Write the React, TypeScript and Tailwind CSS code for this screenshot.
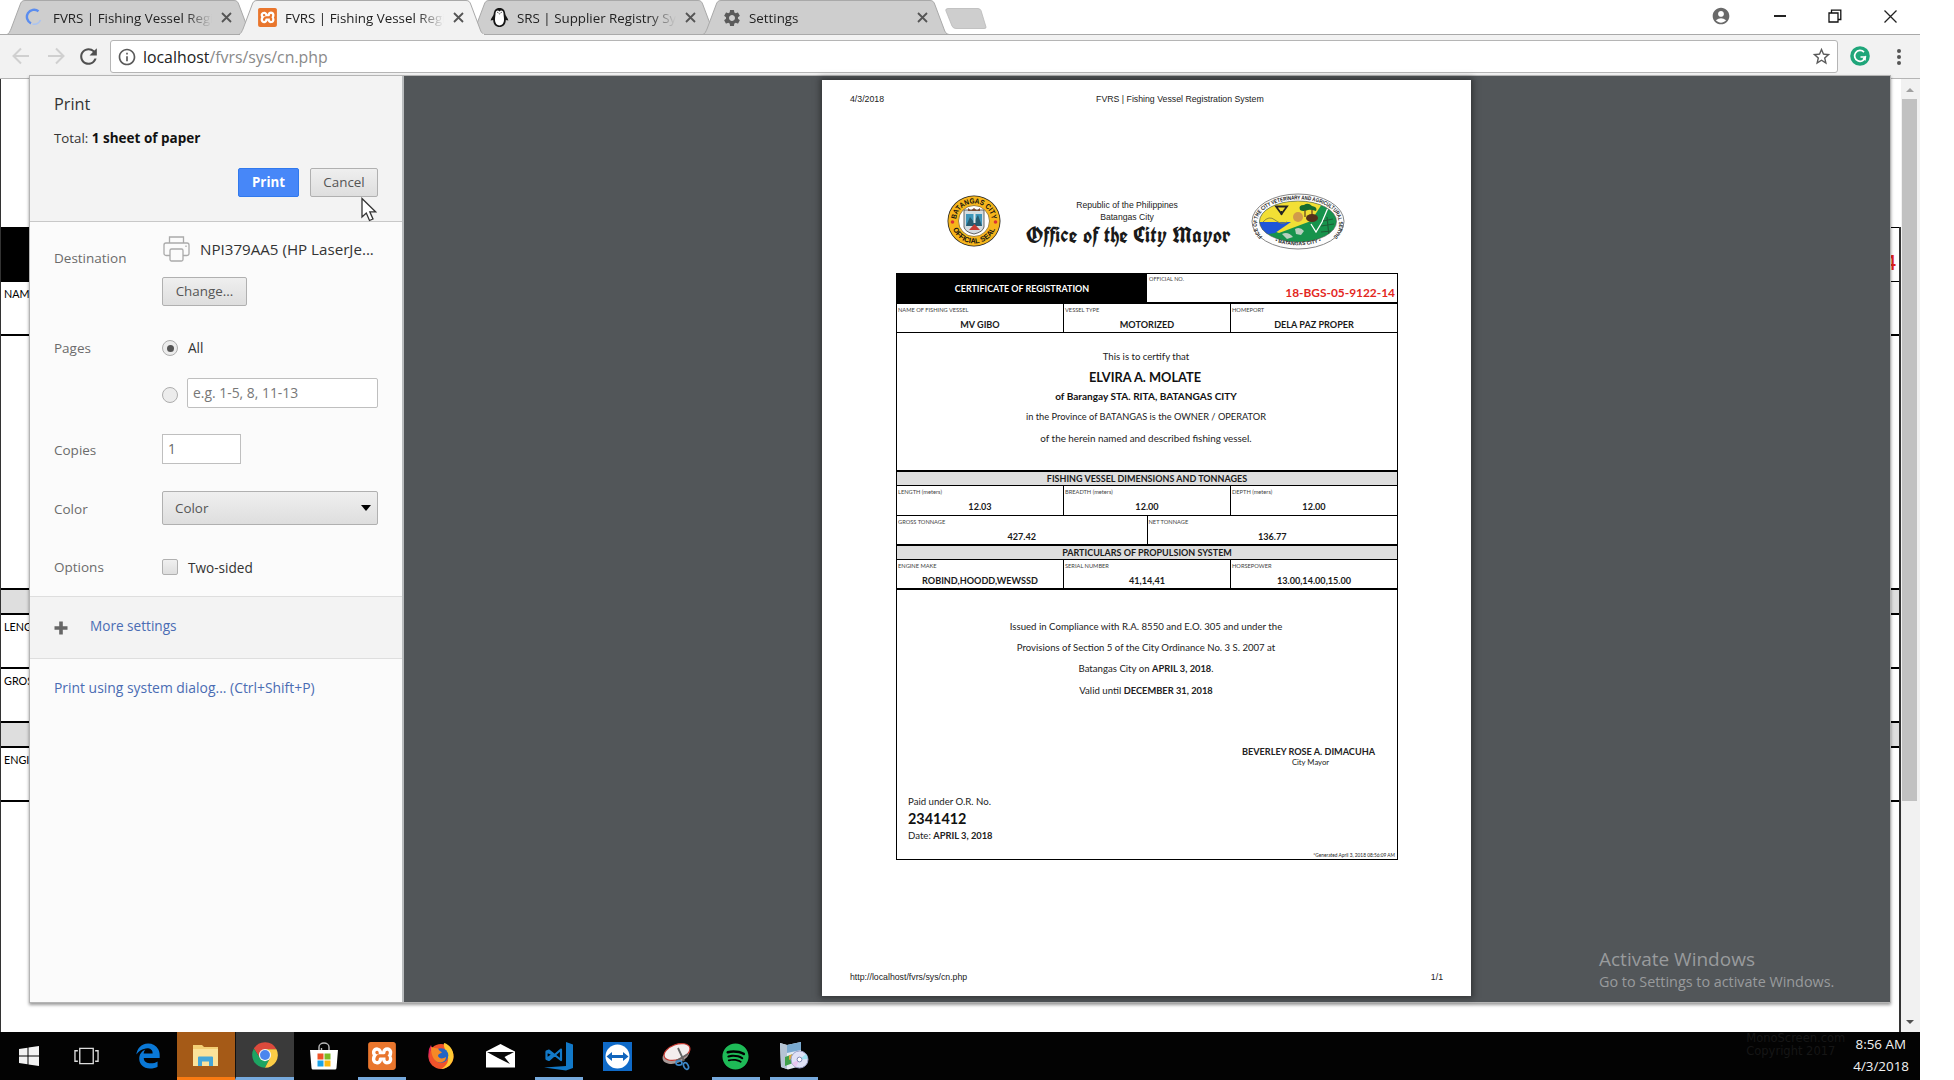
import type { ReactNode } from "react";
import { FaEdgeLegacy, FaSpotify } from "react-icons/fa6";
import { MdSettings, MdAccountCircle, MdStarBorder, MdRefresh, MdInfoOutline } from "react-icons/md";
import { SiXampp } from "react-icons/si";

function TabShape({ active }: { active?: boolean }) {
  return (
    <svg className="absolute inset-0" width="246" height="35" viewBox="0 0 246 35">
      <path d="M0 34.5 C2 34 3 31 4 29 L13 5 C14 2 15 .5 18 .5 H227 C230 .5 231 2 232 5 L241 29 C242 32 243 34 246 34.5 Z" fill={active ? "#f2f2f2" : "#cecece"} stroke="#a9a9a9" />
      {active && <path d="M1 34.5H245" stroke="#f2f2f2" strokeWidth="1.4" />}
    </svg>
  );
}

function Tab({ title, icon, active }: { title: string; icon: ReactNode; active?: boolean }) {
  return (
    <div className={`relative -ml-[14px] h-[35px] w-[246px] shrink-0 ${active ? "z-10" : ""}`}>
      <TabShape active={active} />
      <div className="relative flex h-[35px] items-center pl-[19px]">
        <span className="flex w-[27px] shrink-0">{icon}</span>
        <span className="w-[159px] overflow-hidden whitespace-nowrap text-[13.35px] leading-5 text-[#222] [mask-image:linear-gradient(to_right,#000_83%,transparent)]">{title}</span>
        <svg className="ml-[9px] shrink-0" width="11" height="11" viewBox="0 0 11 11">
          <path d="M1 1L10 10M10 1L1 10" stroke="#555" strokeWidth="1.8" />
        </svg>
      </div>
    </div>
  );
}

function Spinner() {
  return (
    <svg width="20" height="20" viewBox="0 0 20 20" fill="none" className="ml-[-1px]">
      <path d="M13.5 3.2A7.2 7.2 0 1 0 6 15.4" stroke="#5b8def" strokeWidth="2.4" />
      <path d="M7.5 16A7.2 7.2 0 0 0 15.5 12" stroke="#a9c3f2" strokeWidth="1.6" />
    </svg>
  );
}

function XamppIcon({ size }: { size: number }) {
  return (
    <span className="relative flex">
      <span className="absolute inset-[2px] bg-white" />
      <SiXampp size={size} color="#e9762d" className="relative" />
    </span>
  );
}

function Penguin() {
  return (
    <svg width="19" height="21" viewBox="0 0 19 21">
      <path d="M9.5 1C5.5 1 4 3.600 3.700 7C3.500 9 1 11 .6 13.500C1.500 13.500 2.500 13.300 3.200 13C3.200 17.500 6 20 9.500 20S15.800 17.500 15.800 13C16.500 13.300 17.500 13.500 18.400 13.500C18 11 15.500 9 15.300 7C15 3.600 13.500 1 9.500 1Z" fill="#161616" />
      <path d="M9.500 4.500C8 2.500 5.500 3.500 5.500 6.500C5.500 8 5 10 5 12.500C5 16.500 7 18.400 9.500 18.400S14 16.500 14 12.500C14 10 13.500 8 13.500 6.500C13.500 3.500 11 2.500 9.500 4.500Z" fill="#fff" />
      <path d="M8.300 6.200H10.700L9.500 7.800Z" fill="#777" />
      <circle cx="7.800" cy="5.300" r=".6" fill="#333" /><circle cx="11.200" cy="5.300" r=".6" fill="#333" />
    </svg>
  );
}

function TabStrip() {
  return (
    <div className="relative flex h-[35px] items-start border-b border-[#a9a9a9] bg-white pl-[21px]">
      <div className="relative z-10 flex">
        <Tab title="FVRS | Fishing Vessel Registration" icon={<Spinner />} />
        <Tab title="FVRS | Fishing Vessel Registration" icon={<XamppIcon size={19} />} active />
        <Tab title="SRS | Supplier Registry System" icon={<Penguin />} />
        <Tab title="Settings" icon={<MdSettings size={20} color="#5a5a5a" />} />
      </div>
      <svg className="mt-[8px] ml-[-4px]" width="42" height="22" viewBox="0 0 42 22">
        <path d="M3 .5H33Q35 .5 36 2.500L41 19Q41.500 20.500 39 20.500H11Q8 20.500 7 18L.8 2.500Q.5.5 3 .5Z" fill="#cecece" stroke="#b9b9b9" strokeWidth=".8" />
      </svg>
      <div className="ml-auto flex h-[32px] items-center pr-[23px]">
        <MdAccountCircle size={20} color="#6a6a6a" className="-mt-px" />
        <span className="ml-[43px] h-[1.500px] w-[12px] bg-[#222]" />
        <svg className="ml-[42px]" width="14" height="14" viewBox="0 0 14 14" fill="none" stroke="#111" strokeWidth="1.300">
          <path d="M1 4H10V13H1ZM3.500 4V1.200H12.800V10.500H10" />
        </svg>
        <svg className="ml-[42px]" width="13" height="13" viewBox="0 0 13 13">
          <path d="M.5.5L12.500 12.500M12.500.5L.5 12.500" stroke="#222" strokeWidth="1.300" />
        </svg>
      </div>
    </div>
  );
}

function Arrow({ flip }: { flip?: boolean }) {
  return (
    <svg width="18" height="18" viewBox="0 0 18 18" fill="none" stroke="#d0d0d0" strokeWidth="2" className={flip ? "rotate-180" : ""}>
      <path d="M17 9H2M9 1.500L1.500 9L9 16.500" />
    </svg>
  );
}

function Toolbar() {
  return (
    <div className="flex h-[44px] items-start border-b border-[#b5b5b5] bg-[#f2f2f2] pt-[5px]">
      <div className="flex h-8 w-[110px] items-center pl-[12px]">
        <Arrow />
        <span className="ml-[17px] flex"><Arrow flip /></span>
        <MdRefresh size={25} color="#505050" className="ml-[11px]" />
      </div>
      <div className="flex h-[33px] w-[1728px] items-center rounded-[3px] border border-[#b5b5b5] bg-white pr-[5px] pl-[6px]">
        <MdInfoOutline size={20} color="#5a5a5a" />
        <span className="ml-[6px] text-[15.850px] leading-6 text-[#222]">localhost<span className="text-[#8a8a8a]">/fvrs/sys/cn.php</span></span>
        <MdStarBorder size={21} color="#5a5a5a" className="ml-auto" />
      </div>
      <svg className="ml-[12px] mt-[6px]" width="20" height="20" viewBox="0 0 20 20">
        <circle cx="10" cy="10" r="9.800" fill="#1fa67a" />
        <path d="M14 6.200A5.400 5.400 0 1 0 15.300 11H10.500" fill="none" stroke="#fff" strokeWidth="1.700" />
        <path d="M15.800 9.600V14.800L12.600 12.500Z" fill="#fff" />
      </svg>
      <div className="mt-[9px] ml-[27px] flex flex-col gap-[2.500px]">
        <span className="size-[3.500px] rounded-full bg-[#555]" />
        <span className="size-[3.500px] rounded-full bg-[#555]" />
        <span className="size-[3.500px] rounded-full bg-[#555]" />
      </div>
    </div>
  );
}

function PageRow({ className, children }: { className: string; children?: ReactNode }) {
  return (
    <div className={`border-b-2 border-black pt-[5px] pl-[3px] ${className}`}>
      <span className="block w-[27px] overflow-hidden whitespace-nowrap">{children}</span>
    </div>
  );
}

function PageBehind() {
  return (
    <div className="flex h-[953px] bg-white">
      <div className="flex w-[1901px] flex-col border-l border-[#333] pt-[148px] font-[Lato,sans-serif] text-[10.800px] leading-[13px] text-black">
        <div className="flex h-[805px] flex-col border-r-2 border-[#333]">
          <div className="flex h-[55px] border-y border-black">
            <div className="w-1/2 bg-black" />
            <div className="w-1/2 pt-[28px] pr-[3px] text-right text-[20px] font-bold text-[#e2231a]">18-BGS-05-9122-14</div>
          </div>
          <PageRow className="h-[54px]">NAME OF FISHING VESSEL</PageRow>
          <PageRow className="h-[254px]" />
          <PageRow className="h-[25px] bg-[#dedede]" />
          <PageRow className="h-[54px]">LENGTH (meters)</PageRow>
          <PageRow className="h-[54px]">GROSS TONNAGE</PageRow>
          <PageRow className="h-[25px] bg-[#dedede]" />
          <PageRow className="h-[54px]">ENGINE MAKE</PageRow>
        </div>
      </div>
      <div className="flex w-[19px] flex-col items-center bg-[#f1f1f1] pr-[2px]">
        <span className="mt-[9px] h-0 w-0 border-x-[4.500px] border-b-[4.500px] border-x-transparent border-b-[#a0a0a0]" />
        <span className="mt-[7px] h-[702px] w-[15px] bg-[#c1c1c1]" />
        <span className="mt-auto mb-[8px] h-0 w-0 border-x-[4.500px] border-t-[4.500px] border-x-transparent border-t-[#505050]" />
      </div>
    </div>
  );
}

function Row({ label, className, children }: { label: string; className: string; children: ReactNode }) {
  return (
    <div className={`flex ${className}`}>
      <span className="w-[108px] shrink-0 text-[13.500px] leading-5 text-[#6b6b6b]">{label}</span>
      {children}
    </div>
  );
}

const button = "border border-[#b0b0b0] rounded-[2px] bg-gradient-to-b from-[#efefef] to-[#dedede] text-[13.400px] text-[#555] flex items-center";

function PrinterIcon() {
  return (
    <svg width="27" height="26" viewBox="0 0 27 26" fill="#fbfbfb" stroke="#aaa" strokeWidth="1.300">
      <path d="M6.500 7V1H20.500V7" />
      <rect x="1" y="7" width="25" height="12.500" rx="2" />
      <rect x="7" y="13" width="13" height="12" rx="1.500" />
      <path d="M23 9.500V11" />
    </svg>
  );
}

function PrintPanel() {
  return (
    <div className="flex h-full w-[374px] shrink-0 flex-col border-r-2 border-[#b9bcbe] bg-[#fbfbfb] text-[13.600px] text-[#333]">
      <div className="flex h-[146px] flex-col border-b border-[#c8c8c8] bg-[#f3f3f3] pl-[24px]">
        <div className="mt-[16px] text-[16.300px] leading-6 text-[#333]">Print</div>
        <div className="mt-[12px] text-[13.300px] leading-5">Total: <b className="text-[13.500px] text-[#111]">1 sheet of paper</b></div>
        <div className="mt-[20px] flex h-[29px] gap-[11px] pl-[184px]">
          <button className="w-[61px] rounded-[2px] border border-[#3079ed] bg-[#4787f8] text-center text-[13.300px] font-bold text-white">Print</button>
          <button className={`${button} w-[68px] justify-center`}>Cancel</button>
        </div>
      </div>
      <div className="flex h-[374px] flex-col pl-[24px]">
        <Row label="Destination" className="h-[107px] pt-[26px]">
          <div className="-mt-[12px] flex flex-col">
            <div className="flex items-center pl-px">
              <PrinterIcon />
              <span className="ml-[10px] text-[15.150px] leading-5 text-[#333]">NPI379AA5 (HP LaserJe...</span>
            </div>
            <button className={`${button} mt-[15px] h-[29px] w-[85px] justify-center`}>Change...</button>
          </div>
        </Row>
        <Row label="Pages" className="h-[99px] pt-[9px]">
          <div className="flex flex-col">
            <div className="flex h-[20px] items-center">
              <span className="flex size-[16px] items-center justify-center rounded-full border border-[#adadad] bg-[#ececec]"><span className="size-[7px] rounded-full bg-[#555]" /></span>
              <span className="ml-[10px]">All</span>
            </div>
            <div className="mt-[20px] flex h-[30px] items-center">
              <span className="mt-[4px] size-[16px] rounded-full border border-[#adadad] bg-[#ececec]" />
              <span className="ml-[9px] flex h-[30px] w-[191px] items-center rounded-[2px] border border-[#bfbfbf] bg-white pl-[5px] text-[13.900px] text-[#777]">e.g. 1-5, 8, 11-13</span>
            </div>
          </div>
        </Row>
        <Row label="Copies" className="h-[59px] items-start pt-[12px]">
          <span className="-mt-[6px] flex h-[30px] w-[79px] items-center border border-[#bfbfbf] bg-white pl-[5px] text-[#666]">1</span>
        </Row>
        <Row label="Color" className="h-[62px] pt-[12px]">
          <div className={`${button} -mt-[8px] h-[34px] w-[216px] justify-between pr-[6px] pl-[12px]`}>
            Color
            <span className="h-0 w-0 border-x-[5.500px] border-t-[6px] border-x-transparent border-t-black" />
          </div>
        </Row>
        <Row label="Options" className="pt-[8px]">
          <span className="mt-[2px] size-[16px] rounded-[2px] border border-[#b0b0b0] bg-gradient-to-b from-[#f0f0f0] to-[#dedede]" />
          <span className="ml-[10px] mt-px leading-5">Two-sided</span>
        </Row>
      </div>
      <div className="flex h-[63px] items-center border-y border-[#dedede] bg-[#f3f3f3] pb-[3px] pl-[24px]">
        <svg width="14" height="14" viewBox="0 0 14 14" className="mt-[4px]"><path d="M7 .5V13.500M.5 7H13.500" stroke="#666" strokeWidth="3.600" /></svg>
        <span className="ml-[22px] text-[#4a6cb3]">More settings</span>
      </div>
      <div className="mt-[19px] pl-[24px] text-[13.900px] leading-5 text-[#4a6cb3]">Print using system dialog... (Ctrl+Shift+P)</div>
    </div>
  );
}

function CitySeal() {
  return (
    <svg width="54" height="52" viewBox="0 0 54 52">
      <ellipse cx="27" cy="26" rx="26.500" ry="25.500" fill="#222" />
      <ellipse cx="27" cy="26" rx="25.700" ry="24.700" fill="#f6b51c" />
      <circle cx="27" cy="26" r="15.500" fill="#fff" stroke="#7a5a10" strokeWidth=".7" />
      <defs>
        <path id="sealTop" d="M9 26A18 17.500 0 0 1 45 26" />
        <path id="sealBottom" d="M4.500 26A22.500 22.500 0 0 0 49.500 26" />
      </defs>
      <g fontFamily="Liberation Sans" fontWeight="700" fontSize="7.400" fill="#111" textAnchor="middle">
        <text><textPath href="#sealTop" startOffset="50%" textLength="52" lengthAdjust="spacingAndGlyphs">BATANGAS CITY</textPath></text>
        <text><textPath href="#sealBottom" startOffset="50%" textLength="54" lengthAdjust="spacingAndGlyphs">OFFICIAL SEAL</textPath></text>
      </g>
      <circle cx="5.500" cy="27" r="1.800" fill="#d33" /><circle cx="48.500" cy="27" r="1.800" fill="#d33" />
      <path d="M17 15H37V32Q36 37 27 39Q18 37 17 32Z" fill="#d5dde0" stroke="#444" strokeWidth=".8" />
      <path d="M19 19H35V31H19Z" fill="#3d95b9" />
      <path d="M19 31L23 22L27 27L31 20L35 31Z" fill="#275c70" />
      <path d="M26.500 19H28.500V28H26.500Z" fill="#dfe8ea" />
      <path d="M22 35L27.500 29L33 35Z" fill="#c53c34" />
      <path d="M21 13L24 15.500L27 13L30 15.500L33 13V16H21Z" fill="#7a4a32" />
    </svg>
  );
}

function VeterinarySeal() {
  return (
    <svg width="94" height="57" viewBox="0 0 94 57">
      <ellipse cx="47" cy="28.500" rx="46" ry="27.500" fill="#fdfdfd" stroke="#777" strokeWidth=".9" />
      <defs>
        <clipPath id="vetInner"><ellipse cx="47" cy="28.500" rx="38.500" ry="20.500" /></clipPath>
        <path id="vetTop" d="M11 43A40.500 22 0 0 1 6.500 28.500A40.500 22 0 0 1 87.500 28.500A40.500 22 0 0 1 83 43" />
        <path id="vetBottom" d="M14 44A46 27 0 0 0 80 44" />
      </defs>
      <g clipPath="url(#vetInner)">
        <path d="M0 0H94V57H0Z" fill="#17934c" />
        <path d="M0 0H78L60 28L28 40L0 30Z" fill="#f2df35" />
        <path d="M0 29H40L24 40L10 42Z" fill="#1f56d8" />
        <path d="M12 29Q18 22 24 27T36 29" fill="none" stroke="#8f8a3a" strokeWidth="1" />
        <path d="M25 13.500H36L30.500 21Z" fill="none" stroke="#222" strokeWidth="1.800" />
        <path d="M30.500 18V22" stroke="#222" strokeWidth="1.500" />
        <path d="M49 17Q47 12 53 12Q57 9 61 13Q67 14 65 18Q59 16 57 17Q52 19 49 17Z" fill="#146b2f" />
        <path d="M54 17V24M61 17V23" stroke="#6b4a22" strokeWidth="1.300" />
        <ellipse cx="47" cy="24" rx="5" ry="5" fill="#d19a4a" />
        <ellipse cx="61" cy="25" rx="6" ry="4" fill="#54301c" />
        <path d="M60 31L65 39L71 29L79 10" fill="none" stroke="#fff" strokeWidth="1.300" />
        <path d="M44 36Q49 33 53 38L50 42L45 41ZM31 41Q37 38 42 44L36 46Z" fill="#b9cfbf" />
        <path d="M72 28L82 26M70 33L83 31M70 39L80 38M76 24L78 43" stroke="#1d5f37" strokeWidth="1.200" />
      </g>
      <ellipse cx="47" cy="28.500" rx="38.500" ry="20.500" fill="none" stroke="#555" strokeWidth=".6" />
      <g fontFamily="Liberation Sans" fontWeight="700" fontSize="5.600" fill="#222" textAnchor="middle">
        <text><textPath href="#vetTop" startOffset="50%" textLength="146" lengthAdjust="spacingAndGlyphs">OFFICE OF THE CITY VETERINARY AND AGRICULTURAL SERVICES</textPath></text>
        <text fontSize="5"><textPath href="#vetBottom" startOffset="50%">• BATANGAS CITY •</textPath></text>
      </g>
    </svg>
  );
}

function Cell({ label, value, last }: { label: string; value: string; last?: boolean }) {
  return (
    <div className={`flex flex-1 flex-col ${last ? "" : "border-r border-black"}`}>
      <span className="h-[11px] pl-px text-[5.700px] leading-[11px] text-[#444]">{label}</span>
      <span className="text-center text-[9.100px] leading-[20px] font-bold text-[#1a1a1a]">{value}</span>
    </div>
  );
}

function Heading({ children }: { children: ReactNode }) {
  return <div className="h-[14px] border-b border-black bg-[#dedede] text-center text-[9px] leading-[14px] font-bold text-[#1a1a1a]">{children}</div>;
}

function Certificate() {
  return (
    <div className="ml-[74px] h-[587px] w-[502px] border border-black font-[Lato,sans-serif] text-[#222]">
      <div className="flex h-[30px] border-b-2 border-black">
        <div className="w-[250px] bg-black pt-px text-center text-[8.950px] leading-[27px] font-bold text-white">CERTIFICATE OF REGISTRATION</div>
        <div className="flex flex-1 flex-col">
          <span className="h-[11px] pl-[2px] text-[5.500px] leading-[11px] text-[#444]">OFFICIAL NO.</span>
          <span className="pr-[2px] text-right text-[11.900px] leading-[16px] font-bold text-[#e3271e]">18-BGS-05-9122-14</span>
        </div>
      </div>
      <div className="flex h-[29px] border-b border-black">
        <Cell label="NAME OF FISHING VESSEL" value="MV GIBO" />
        <Cell label="VESSEL TYPE" value="MOTORIZED" />
        <Cell label="HOMEPORT" value="DELA PAZ PROPER" last />
      </div>
      <div className="flex h-[139px] flex-col items-center border-b-2 border-black pt-[14px] pr-[2px] text-[9.600px]">
        <p className="leading-[20px]">This is to certify that</p>
        <p className="pr-[2px] text-[12.800px] leading-[20px] font-bold text-[#111]">ELVIRA A. MOLATE</p>
        <p className="text-[10.050px] leading-[18px] font-bold text-[#111]">of Barangay STA. RITA, BATANGAS CITY</p>
        <p className="text-[9.250px] leading-[23px]">in the Province of BATANGAS is the OWNER / OPERATOR</p>
        <p className="text-[9.850px] leading-[20px]">of the herein named and described fishing vessel.</p>
      </div>
      <Heading>FISHING VESSEL DIMENSIONS AND TONNAGES</Heading>
      <div className="flex h-[30px] border-b border-black">
        <Cell label="LENGTH (meters)" value="12.03" />
        <Cell label="BREADTH (meters)" value="12.00" />
        <Cell label="DEPTH (meters)" value="12.00" last />
      </div>
      <div className="flex h-[30px] border-b-2 border-black">
        <Cell label="GROSS TONNAGE" value="427.42" />
        <Cell label="NET TONNAGE" value="136.77" last />
      </div>
      <Heading>PARTICULARS OF PROPULSION SYSTEM</Heading>
      <div className="flex h-[30px] border-b-2 border-black">
        <Cell label="ENGINE MAKE" value="ROBIND,HOODD,WEWSSD" />
        <Cell label="SERIAL NUMBER" value="41,14,41" />
        <Cell label="HORSEPOWER" value="13.00,14.00,15.00" last />
      </div>
      <div className="flex h-[269px] flex-col pt-[25px] text-[9.650px]">
        <p className="pr-[2px] text-center leading-[22px]">Issued in Compliance with R.A. 8550 and E.O. 305 and under the</p>
        <p className="pr-[2px] text-center text-[9.570px] leading-[21px]">Provisions of Section 5 of the City Ordinance No. 3 S. 2007 at</p>
        <p className="pr-[2px] text-center leading-[20px]">Batangas City on <b className="text-[9.300px]">APRIL 3, 2018</b>.</p>
        <p className="pr-[2px] text-center leading-[22px]">Valid until <b className="text-[9.300px]">DECEMBER 31, 2018</b></p>
        <div className="mt-[44px] mr-[21px] w-[135px] self-end text-center">
          <p className="text-[9.150px] leading-[11px] font-bold whitespace-nowrap">BEVERLEY ROSE A. DIMACUHA</p>
          <p className="pl-[4px] text-[7.700px] leading-[10px]">City Mayor</p>
        </div>
        <div className="mt-[25px] pl-[11px]">
          <p className="leading-[18px]">Paid under O.R. No.</p>
          <p className="text-[14.400px] leading-[17px] font-bold text-[#111]">2341412</p>
          <p className="leading-[16px]">Date: <b className="text-[9.300px]">APRIL 3, 2018</b></p>
        </div>
        <p className="mt-[7px] pr-[2px] text-right text-[4.800px] leading-[8px]">*Generated April 3, 2018 08:56:09 AM</p>
      </div>
    </div>
  );
}

function PreviewPage() {
  return (
    <div className="flex h-[916px] w-[649px] flex-col bg-white font-[Liberation_Sans,sans-serif] text-[8.750px] text-[#222] shadow-[0_0_6px_2px_rgba(20,20,20,0.5)]">
      <div className="flex pt-[13px] pl-[28px] leading-[12px]">
        <span>4/3/2018</span>
        <span className="ml-[212px]">FVRS | Fishing Vessel Registration System</span>
      </div>
      <div className="mt-[88px] flex h-[57px] items-start pl-[125px]">
        <span className="mt-[2px]"><CitySeal /></span>
        <div className="ml-[23px] w-[206px] pt-[6px] text-center text-[8.650px] leading-[12px] whitespace-nowrap">
          <p>Republic of the Philippines</p>
          <p>Batangas City</p>
          <p className="-mt-px pl-[2px] font-['Old_English_Text_MT','UnifrakturCook','Liberation_Serif',serif] text-[21.500px] leading-[26px] font-bold tracking-[0.2px] text-[#1a1a1a]">Office of the City Mayor</p>
        </div>
        <span className="ml-[21px]"><VeterinarySeal /></span>
      </div>
      <div className="mt-[22.500px]"><Certificate /></div>
      <div className="mt-auto flex justify-between pr-[28px] pb-[13px] pl-[28px] leading-[12px]">
        <span>http://localhost/fvrs/sys/cn.php</span>
        <span>1/1</span>
      </div>
    </div>
  );
}

function ChromeIcon() {
  return (
    <svg width="28" height="28" viewBox="0 0 48 48">
      <path d="M24 14H43.600A22 22 0 0 0 4.950 13L15.340 29Z" fill="#db4a3c" />
      <path d="M15.340 29L4.950 13A22 22 0 0 0 24 46L32.660 29Z" fill="#1da462" />
      <path d="M32.660 29L24 46A22 22 0 0 0 43.600 14H24Z" fill="#fdcd46" />
      <circle cx="24" cy="24" r="10.500" fill="#f4f4f4" />
      <circle cx="24" cy="24" r="8.500" fill="#4a86ee" />
    </svg>
  );
}

function FirefoxIcon() {
  return (
    <svg width="28" height="28" viewBox="0 0 28 28">
      <circle cx="14" cy="14.500" r="12.500" fill="#f0532a" />
      <path d="M17 1C22 2 27 8 26.500 15C26 22 20 27 14 27C20 24 23 18 20 12C19 8 16 5 17 1Z" fill="#ffc933" />
      <path d="M2 7C1 13 1 20 7 24.500C2 21 1 12 5 6L4 3Z" fill="#e0245e" />
      <circle cx="14" cy="13.500" r="7.300" fill="#2464c4" />
      <path d="M4 5C7 6 9 6 11 6.500C12 9 14 9.500 15 10.500C13 11.500 11 12 11 14C12 17 16 17 19 15C19 20 13 22 9 19C5 16 4 10 4 5Z" fill="#f58a26" />
    </svg>
  );
}

function TaskItem({ children, open, className = "" }: { children: ReactNode; open?: boolean; className?: string }) {
  return (
    <div className={`relative flex w-[58.850px] shrink-0 items-center justify-center ${className}`}>
      {children}
      {open && <span className="absolute bottom-0 h-[3px] w-[48px] bg-[#76a9dc]" />}
    </div>
  );
}

function Taskbar() {
  return (
    <div className="flex h-[48px] w-[1920px] bg-[#030303]">
      <TaskItem>
        <svg className="-ml-px" width="20" height="20" viewBox="0 0 20 20" fill="#f2f2f2"><path d="M0 3L8.500 1.700V9.500H0ZM9.500 1.500L20 0V9.500H9.500ZM0 10.500H8.500V18.300L0 17ZM9.500 10.500H20V20L9.500 18.500Z" /></svg>
      </TaskItem>
      <TaskItem>
        <svg className="mr-[4px]" width="25" height="18" viewBox="0 0 26 18" fill="none" stroke="#ddd" strokeWidth="1.400"><path d="M6 1H20V17H6ZM4 3.500H1V14.500H4M22 3.500H25V14.500H22" /></svg>
      </TaskItem>
      <TaskItem><FaEdgeLegacy size={26} color="#0a78d6" className="ml-[2px]" /></TaskItem>
      <TaskItem className="border-b-[3px] border-[#f97a12] bg-[#a55a17]">
        <svg width="27" height="23" viewBox="0 0 27 23" className="mt-[1px]">
          <path d="M1 1H10L12 3H26V22H1Z" fill="#f3cf74" /><path d="M1 5H26V22H1Z" fill="#fbe29a" />
          <path d="M6 13.500Q6 12.500 7 12.500H20Q21 12.500 21 13.500V22H17V17.500H10V22H6Z" fill="#45a6d8" />
        </svg>
      </TaskItem>
      <TaskItem className="border-b-[3px] border-l border-b-[#76a9dc] border-l-[#111] bg-[#3a3a3a]"><ChromeIcon /></TaskItem>
      <TaskItem>
        <svg width="28" height="28" viewBox="0 0 28 28">
          <path d="M9 9V5A5 4 0 0 1 19 5V9M11.500 8V6" fill="none" stroke="#bbb" strokeWidth="1.400" />
          <path d="M0 8H28L26.500 26Q26.400 27.500 25 27.500H3Q1.600 27.500 1.500 26Z" fill="#fff" />
          <path d="M7.500 11.500H13.500V17.500H7.500Z" fill="#ef5327" /><path d="M14.500 11.500H20.500V17.500H14.500Z" fill="#7fba24" />
          <path d="M7.500 18.500H13.500V24.500H7.500Z" fill="#1ba3e8" /><path d="M14.500 18.500H20.500V24.500H14.500Z" fill="#fcb912" />
        </svg>
      </TaskItem>
      <TaskItem open><XamppIcon size={28} /></TaskItem>
      <TaskItem><FirefoxIcon /></TaskItem>
      <TaskItem>
        <svg width="29" height="24" viewBox="0 0 29 24"><path d="M0 7.500L14.500 0L29 7.500V23.500H0Z" fill="#fff" /><path d="M1 8H28L18.500 13L24 20L12 14Z" fill="#080808" /></svg>
      </TaskItem>
      <TaskItem open>
        <svg width="30" height="29" viewBox="0 0 30 29">
          <path d="M22 0L29 2.500V26L22 28.500L0 25.500L22 24Z" fill="#1279c8" />
          <path d="M2.500 9.500L5 8.500L17 18V7.500L5 18L2.500 17L9 12.500Z M2.500 9.500V17" fill="none" stroke="#1279c8" strokeWidth="2.200" strokeLinejoin="round" />
        </svg>
      </TaskItem>
      <TaskItem>
        <svg width="29" height="29" viewBox="0 0 29 29"><path d="M0 0H29V29H0Z" fill="#0f6ac8" /><circle cx="14.500" cy="14.500" r="12" fill="#fff" /><path d="M3.500 14.500L9 10V13H20V10L25.500 14.500L20 19V16H9V19Z" fill="#1165bd" /></svg>
      </TaskItem>
      <TaskItem>
        <svg width="30" height="29" viewBox="0 0 30 29">
          <ellipse cx="14" cy="13" rx="14" ry="8" transform="rotate(-20 14 13)" fill="#a99a98" />
          <ellipse cx="15" cy="10" rx="13.500" ry="7.500" transform="rotate(-20 15 10)" fill="#f3eeee" stroke="#c8382f" strokeWidth="1.200" />
          <path d="M16 6L22 19M26 12L14 19" stroke="#666" strokeWidth="1.800" />
          <ellipse cx="17" cy="21" rx="3" ry="2.200" fill="none" stroke="#3d88c9" strokeWidth="1.700" /><ellipse cx="24" cy="24" rx="2.200" ry="3.500" transform="rotate(-25 24 24)" fill="none" stroke="#3d88c9" strokeWidth="1.700" />
        </svg>
      </TaskItem>
      <TaskItem open><span className="flex rounded-full bg-black"><FaSpotify size={27} color="#1eba57" /></span></TaskItem>
      <TaskItem open>
        <svg width="30" height="28" viewBox="0 0 30 28">
          <path d="M1 1L8 3L22 0V24L9 27.500L2 25Z" fill="#e3eaf2" /><path d="M1 1L8 3V27L2 25Z" fill="#b5c4d4" /><path d="M8 3L22 0V8L8 11Z" fill="#79a9cf" />
          <path d="M6 15L14 12V21L6 24Z" fill="#3fa04a" /><path d="M10 13.500L14 12V16L10 18Z" fill="#e0a93c" />
          <circle cx="20.500" cy="17.500" r="8.500" fill="#dfe1f6" stroke="#9aa0c8" /><path d="M20.500 17.500L27 12A8 8 0 0 1 28.500 17Z" fill="#9fe0f0" /><path d="M20.500 17.500L13 21A8 8 0 0 0 17 25Z" fill="#e8c6ef" />
          <circle cx="20.500" cy="17.500" r="2.400" fill="#fff" stroke="#8087b5" />
        </svg>
      </TaskItem>
      <div className="ml-auto flex text-[13.400px] text-[#f2f2f2]">
        <div className="w-[107px] font-['DejaVu_Sans',sans-serif] text-[11.500px] leading-[13px] text-[#161616]">MonoScreen.com<br />Copyright 2017</div>
        <div className="flex flex-col items-end pt-[2px] pr-[11px] leading-[21.500px]">
          <span className="pr-[3px]">8:56 AM</span>
          <span>4/3/2018</span>
        </div>
      </div>
    </div>
  );
}

export default function App() {
  return (
    <div className="h-[1080px] w-[1954px] overflow-hidden bg-white font-['Open_Sans',sans-serif]">
      <div className="relative h-[1080px] w-[1920px]">
        <TabStrip />
        <Toolbar />
        <PageBehind />
        <Taskbar />
        <div className="absolute top-[75px] left-[29px] flex h-[928px] w-[1862px] border border-[#b5b5b5] shadow-[0_2px_3px_rgba(0,0,0,0.4)]">
          <PrintPanel />
          <div className="flex flex-1 bg-[#525659] pt-[4px] pl-[418px]">
            <PreviewPage />
          </div>
        </div>
        <div className="absolute top-[947px] left-[1599px] text-[#999b9d]">
          <div className="text-[19px] leading-[24px]">Activate Windows</div>
          <div className="text-[14.370px] leading-[22px]">Go to Settings to activate Windows.</div>
        </div>
        <svg className="absolute top-[197px] left-[361px]" width="16" height="25" viewBox="0 0 16 25">
          <path d="M1 1.500V20L5.300 16L8.500 23.500L12 22L8.800 14.800H14.500Z" fill="#fff" stroke="#333" strokeWidth="1.300" />
        </svg>
      </div>
    </div>
  );
}
